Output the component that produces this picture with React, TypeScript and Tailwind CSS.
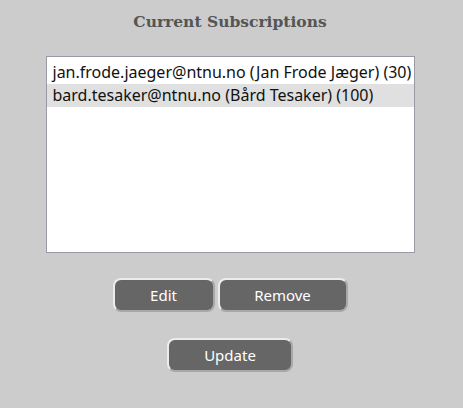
export default function App() {
  const subs = [
    { email: 'jan.frode.jaeger@ntnu.no', name: 'Jan Frode Jæger', amount: 30 },
    { email: 'bard.tesaker@ntnu.no', name: 'Bård Tesaker', amount: 100 },
  ]
  const selected = 1

  const btn =
    'h-[34px] rounded-[8px] bg-[#666666] text-white text-[15px] border-2 border-t-[#ececec] border-l-[#ececec] border-r-[#a8a8a8] border-b-[#a8a8a8] font-["Noto_Sans",sans-serif]'

  return (
    <div className="w-[463px] h-[408px] bg-[#cccccc] pr-[3px] flex flex-col items-center">
      <h2 className="mt-[12px] text-[15.5px] font-bold text-[#555555] font-['DejaVu_Serif',serif] leading-[20px]">
        Current Subscriptions
      </h2>

      <div className="mt-[24px] w-[369px] h-[197px] bg-white border border-[#9a9aa4] py-[4px] font-['Noto_Sans',sans-serif] text-[16px] text-[#111]">
        {subs.map((s, i) => (
          <div
            key={s.email}
            className={`h-[23px] leading-[23px] pl-[6px] whitespace-nowrap ${i === selected ? 'bg-[#e0e0e0]' : ''}`}
          >
            {s.email} ({s.name}) ({s.amount})
          </div>
        ))}
      </div>

      <div className="mt-[25px] flex gap-[3px]">
        <button className={`${btn} w-[102px]`}>Edit</button>
        <button className={`${btn} w-[130px]`}>Remove</button>
      </div>

      <div className="mt-[26px]">
        <button className={`${btn} w-[126px]`}>Update</button>
      </div>
    </div>
  )
}
